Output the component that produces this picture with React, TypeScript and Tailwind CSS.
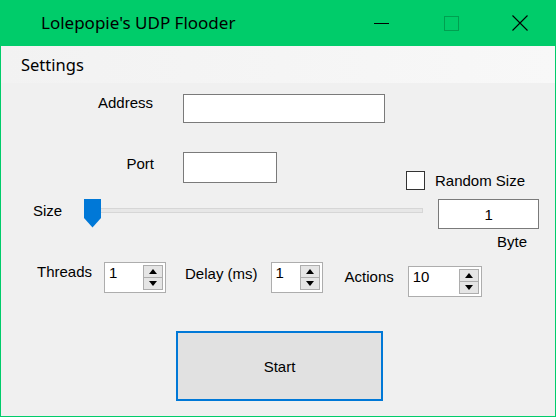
import React from "react";

// small up/down box like the WinForms NumericUpDown
function Spinner({ value, width }: { value: string; width: string }) {
  return (
    <div className={`flex h-[31px] ${width} border border-[#adadad] bg-white p-[2px]`}>
      <div className="flex-1 pl-[2px] text-[15px] leading-[15px] text-black">{value}</div>
      <div className="flex w-[20px] flex-col">
        <div className="flex h-[13px] items-center justify-center border border-[#adadad] bg-[#e5e5e5]">
          <svg width="8" height="5" viewBox="0 0 8 5">
            <path d="M0 5 L4 0 L8 5 Z" fill="#000" />
          </svg>
        </div>
        <div className="mt-[-1px] flex h-[13px] items-center justify-center border border-[#adadad] bg-[#e5e5e5]">
          <svg width="8" height="5" viewBox="0 0 8 5">
            <path d="M0 0 L4 5 L8 0 Z" fill="#000" />
          </svg>
        </div>
      </div>
    </div>
  );
}

function App() {
  return (
    <div className="flex h-[417px] w-[556px] flex-col overflow-hidden border-x border-b border-[#00cc6a] bg-[#f0f0f0] font-['Liberation_Sans',Arial,sans-serif] text-[15px] leading-[17px] text-black">
      {/* title bar */}
      <div className="mx-[-1px] flex h-[46px] shrink-0 items-center bg-[#00cc6a]">
        <div className="pl-[41px] font-['Noto_Sans',sans-serif] text-[17px] leading-[24px] text-black">
          Lolepopie's UDP Flooder
        </div>
        <div className="ml-auto flex h-full">
          <div className="flex w-[70px] items-center justify-center">
            <div className="h-px w-[15px] bg-black" />
          </div>
          <div className="flex w-[70px] items-center justify-center">
            <div className="h-[15px] w-[15px] border border-[#00a050]" />
          </div>
          <div className="flex w-[70px] items-center justify-center pr-[2px]">
            <svg width="16" height="16" viewBox="0 0 16 16">
              <path d="M0.5 0.5 L15.5 15.5 M15.5 0.5 L0.5 15.5" stroke="#000" strokeWidth="1.1" />
            </svg>
          </div>
        </div>
      </div>

      {/* menu bar */}
      <div className="flex h-[37px] shrink-0 items-center bg-gradient-to-r from-[#f2f2f2] to-[#f8f8f8] pl-[20px] font-['Noto_Sans',sans-serif] text-[16.5px] leading-[22px]">
        Settings
      </div>

      {/* address */}
      <div className="mt-[11px] flex items-start">
        <div className="w-[152px] text-right">Address</div>
        <div className="ml-[30px] h-[29px] w-[202px] border border-[#7a7a7a] bg-white" />
      </div>

      {/* port + random size */}
      <div className="mt-[29px] flex items-start">
        <div className="w-[153px] pt-[3px] text-right">Port</div>
        <div className="ml-[29px] h-[31px] w-[94px] border border-[#7a7a7a] bg-white" />
        <div className="ml-[129px] mt-[19px] flex items-center">
          <div className="h-[19px] w-[19px] border border-[#333] bg-white" />
          <div className="ml-[10px]">Random Size</div>
        </div>
      </div>

      {/* size slider */}
      <div className="mt-[9px] flex items-start">
        <div className="ml-[32px] pt-[3px]">Size</div>
        <div className="relative ml-[22px] h-[29px] w-[339px]">
          <div className="absolute left-0 right-0 top-[9px] h-[5px] border border-[#d6d6d6] bg-[#e7e7e7]" />
          <svg className="absolute left-0 top-0" width="17" height="29" viewBox="0 0 17 29">
            <path d="M0 0 H17 V19 L8.5 28.5 L0 19 Z" fill="#0078d7" />
          </svg>
        </div>
        <div className="ml-[15px] flex h-[30px] w-[101px] items-center justify-center border border-[#7a7a7a] bg-white">
          1
        </div>
      </div>
      <div className="ml-[496px] mt-[4px]">Byte</div>

      {/* threads / delay / actions */}
      <div className="mt-[12px] flex items-start">
        <div className="ml-[36px] pt-[1px]">Threads</div>
        <div className="ml-[12px]">
          <Spinner value="1" width="w-[62px]" />
        </div>
        <div className="ml-[19px] pt-[3px]">Delay (ms)</div>
        <div className="ml-[13px]">
          <Spinner value="1" width="w-[52px]" />
        </div>
        <div className="ml-[22px] pt-[6px]">Actions</div>
        <div className="ml-[14px] mt-[4px]">
          <Spinner value="10" width="w-[74px]" />
        </div>
      </div>

      {/* start */}
      <div className="mt-[34px] flex">
        <button className="ml-[175px] flex h-[70px] w-[207px] items-center justify-center border-2 border-[#0078d7] bg-[#e1e1e1] text-[15px]">
          Start
        </button>
      </div>
    </div>
  );
}

export default App;
